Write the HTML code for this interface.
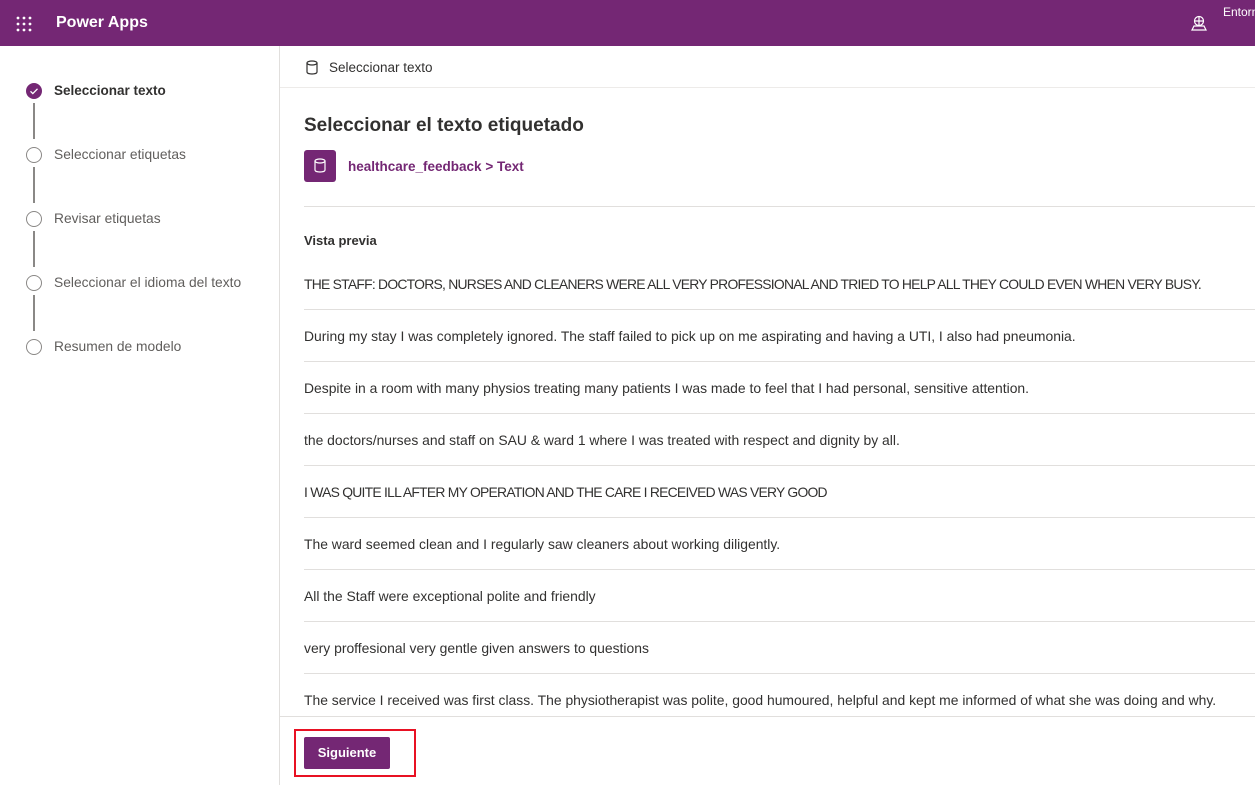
<!DOCTYPE html>
<html><head><meta charset="utf-8"><style>
*{box-sizing:border-box;margin:0;padding:0}
body{width:1255px;height:785px;overflow:hidden;font-family:"Liberation Sans",sans-serif;color:#323130;background:#fff;position:relative}
.hdr{position:absolute;left:0;top:0;width:1255px;height:46px;background:#742774;color:#fff}
.hdr .t{position:absolute;left:56px;top:14px;font-size:16px;font-weight:bold}
.hdr .env{position:absolute;left:1223px;top:5px;font-size:12px}
.side{position:absolute;left:0;top:46px;width:280px;height:739px;border-right:1px solid #e1dfdd}
.step{position:absolute;left:54px;font-size:13.8px;color:#605e5c}
.circ{position:absolute;left:26px;width:16px;height:16px;border:1.5px solid #8a8886;border-radius:50%}
.ln{position:absolute;left:33px;width:2px;height:36px;background:#8a8886}
.top{position:absolute;left:280px;top:46px;width:975px;height:42px;border-bottom:1px solid #edebe9;font-size:13.5px}
.row{position:absolute;left:304px;width:951px;font-size:13.9px;color:#323130;white-space:nowrap}
.up{letter-spacing:-0.75px}
.sep{position:absolute;left:304px;width:951px;height:1px;background:#e1dfdd}
</style></head><body>
<div class="hdr">
<svg style="position:absolute;left:16px;top:16px" width="16" height="16" fill="#fff"><circle cx="2" cy="2" r="1.4"/><circle cx="8" cy="2" r="1.4"/><circle cx="14" cy="2" r="1.4"/><circle cx="2" cy="8" r="1.4"/><circle cx="8" cy="8" r="1.4"/><circle cx="14" cy="8" r="1.4"/><circle cx="2" cy="14" r="1.4"/><circle cx="8" cy="14" r="1.4"/><circle cx="14" cy="14" r="1.4"/></svg>
<div class="t">Power Apps</div>
<svg style="position:absolute;left:1191px;top:15px" width="16" height="16" fill="none" stroke="#fff" stroke-width="1.2"><circle cx="8" cy="6" r="4.5"/><path d="M3.5 6h9M8 1.5v9M1 15h14l-2-4H3z"/></svg>
<div class="env">Entorn</div>
</div>
<div class="side">
<div style="position:absolute;left:26px;top:37px;width:16px;height:16px;border-radius:50%;background:#742774"></div>
<svg style="position:absolute;left:26px;top:37px" width="16" height="16" fill="none" stroke="#fff" stroke-width="1.3"><path d="M4.5 8.3l2.3 2.3 4.7-4.8"/></svg>
<div class="step" style="top:37px;color:#323130;font-weight:bold;font-size:13.5px">Seleccionar texto</div>
<div class="ln" style="top:57px"></div>
<div class="circ" style="top:101px"></div><div class="step" style="top:101px">Seleccionar etiquetas</div>
<div class="ln" style="top:121px"></div>
<div class="circ" style="top:165px"></div><div class="step" style="top:165px">Revisar etiquetas</div>
<div class="ln" style="top:185px"></div>
<div class="circ" style="top:229px"></div><div class="step" style="top:229px">Seleccionar el idioma del texto</div>
<div class="ln" style="top:249px"></div>
<div class="circ" style="top:293px"></div><div class="step" style="top:293px">Resumen de modelo</div>
</div>
<div class="top">
<svg style="position:absolute;left:26px;top:14px" width="12" height="15" fill="none" stroke="#323130" stroke-width="1.2"><ellipse cx="6" cy="3" rx="5" ry="2"/><path d="M1 3v9c0 1.2 2.2 2 5 2s5-.8 5-2V3"/></svg>
<div style="position:absolute;left:49px;top:14px">Seleccionar texto</div>
</div>
<div style="position:absolute;left:304px;top:115px;font-size:19px;font-weight:bold;color:#323130">Seleccionar el texto etiquetado</div>
<div style="position:absolute;left:304px;top:150px;width:32px;height:32px;background:#742774;border-radius:3px"></div>
<svg style="position:absolute;left:314px;top:158px" width="12" height="15" fill="none" stroke="#fff" stroke-width="1.2"><ellipse cx="6" cy="3" rx="5" ry="2"/><path d="M1 3v9c0 1.2 2.2 2 5 2s5-.8 5-2V3"/></svg>
<div style="position:absolute;left:348px;top:159px;font-size:13.5px;color:#742774;font-weight:bold">healthcare_feedback &gt; Text</div>
<div class="sep" style="top:206px"></div>
<div class="row" style="top:233px;font-weight:bold;font-size:13px">Vista previa</div>
<div class="row up" style="top:276px">THE STAFF: DOCTORS, NURSES AND CLEANERS WERE ALL VERY PROFESSIONAL AND TRIED TO HELP ALL THEY COULD EVEN WHEN VERY BUSY.</div>
<div class="sep" style="top:309px"></div>
<div class="row" style="top:328px">During my stay I was completely ignored. The staff failed to pick up on me aspirating and having a UTI, I also had pneumonia.</div>
<div class="sep" style="top:361px"></div>
<div class="row" style="top:380px">Despite in a room with many physios treating many patients I was made to feel that I had personal, sensitive attention.</div>
<div class="sep" style="top:413px"></div>
<div class="row" style="top:432px">the doctors/nurses and staff on SAU &amp; ward 1 where I was treated with respect and dignity by all.</div>
<div class="sep" style="top:465px"></div>
<div class="row up" style="top:484px">I WAS QUITE ILL AFTER MY OPERATION AND THE CARE I RECEIVED WAS VERY GOOD</div>
<div class="sep" style="top:517px"></div>
<div class="row" style="top:536px">The ward seemed clean and I regularly saw cleaners about working diligently.</div>
<div class="sep" style="top:569px"></div>
<div class="row" style="top:588px">All the Staff were exceptional polite and friendly</div>
<div class="sep" style="top:621px"></div>
<div class="row" style="top:640px">very proffesional very gentle given answers to questions</div>
<div class="sep" style="top:673px"></div>
<div class="row" style="top:692px">The service I received was first class. The physiotherapist was polite, good humoured, helpful and kept me informed of what she was doing and why.</div>
<div style="position:absolute;left:280px;top:716px;width:975px;height:1px;background:#e1dfdd"></div>
<div style="position:absolute;left:294px;top:729px;width:122px;height:48px;border:2px solid #e81123"></div>
<div style="position:absolute;left:304px;top:737px;width:86px;height:32px;background:#742774;border-radius:2px;color:#fff;font-weight:bold;font-size:13px;text-align:center;line-height:32px">Siguiente</div>
</body></html>
